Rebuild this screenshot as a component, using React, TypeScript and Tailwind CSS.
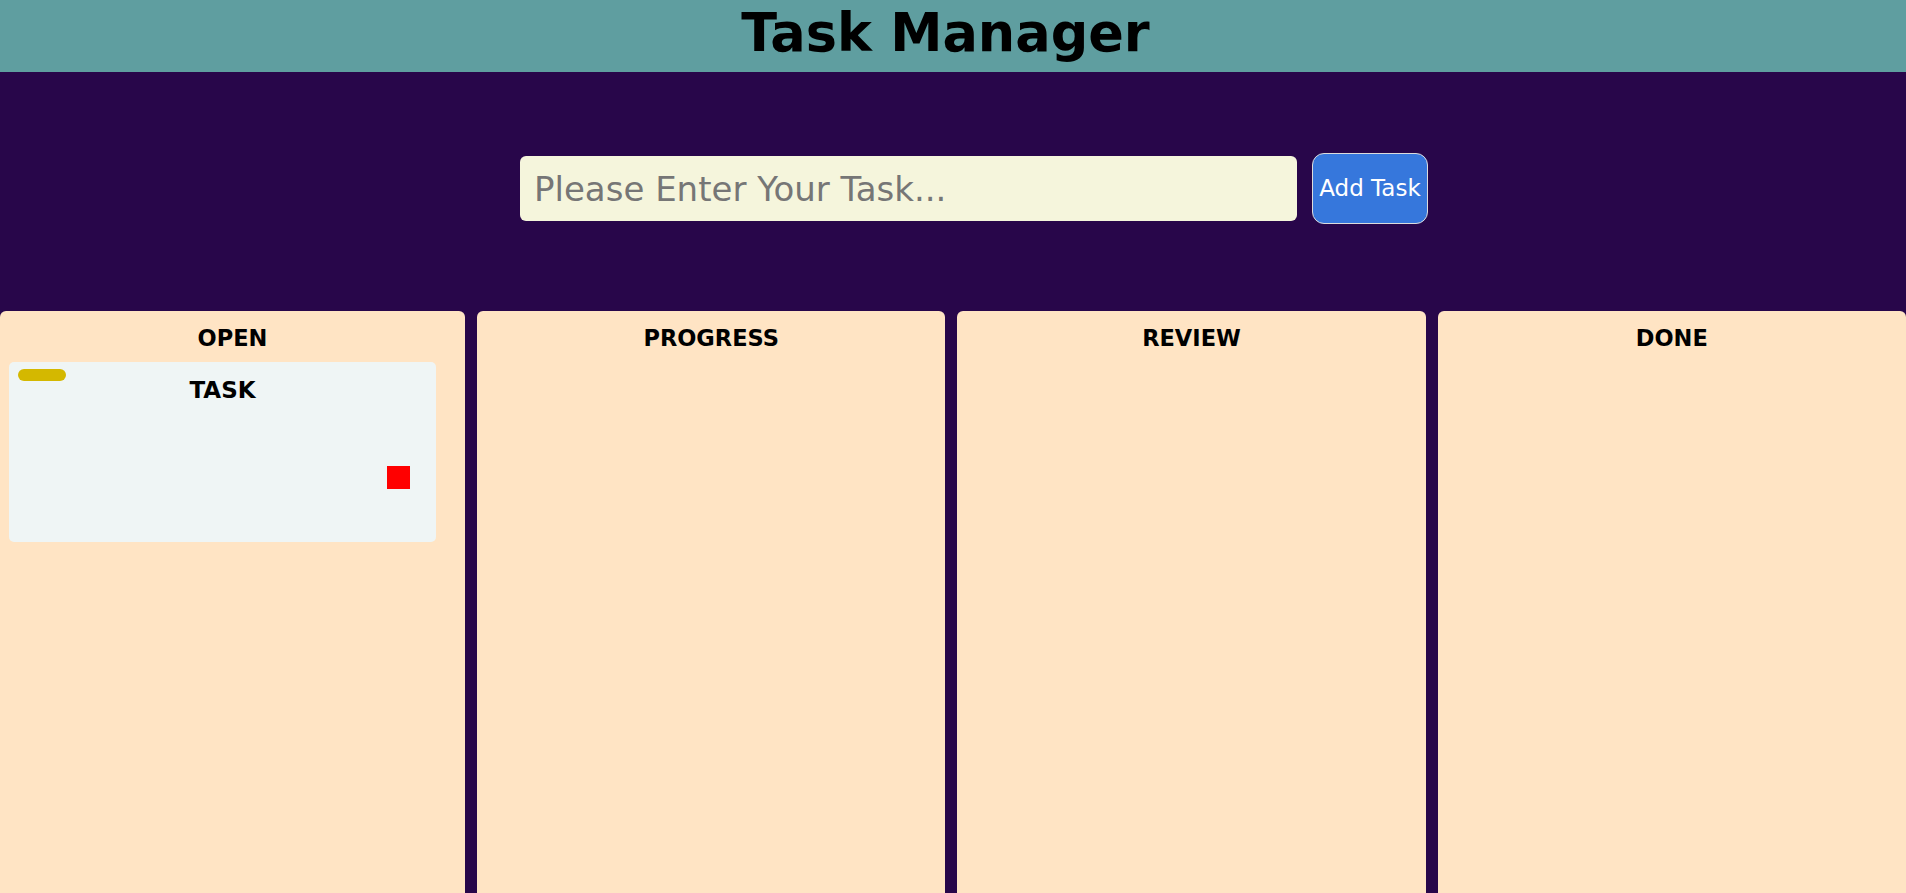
const columns = ['OPEN', 'PROGRESS', 'REVIEW', 'DONE'];

function TaskCard() {
  return (
    <div className="relative ml-[9px] mt-[11px] h-[180px] w-[427px] rounded-[5px] bg-[#eff5f5] pt-[15px]">
      <span className="absolute left-[9px] top-[7px] h-3 w-12 rounded-full bg-[#d4b800]" />
      <p className="text-center text-[23px] leading-[normal] font-bold text-black">TASK</p>
      <div className="mt-[63px] flex justify-end pr-[26px]">
        <button type="button" aria-label="delete" className="h-[23px] w-[23px] bg-[#ff0000]" />
      </div>
    </div>
  );
}

function Column({ title }: { title: string }) {
  return (
    <section className="min-h-[600px] rounded-t-md bg-[#ffe4c4] pt-[14px]">
      <h2 className="text-center text-[22.5px] leading-[normal] font-bold text-black">{title}</h2>
      {title === 'OPEN' && <TaskCard />}
    </section>
  );
}

export default function App() {
  return (
    <div className="min-h-screen bg-[#28064a] font-['DejaVu_Sans',sans-serif]">
      <header className="flex h-[72px] items-start justify-center bg-[#5f9ea0] pr-[15px] pt-[7px]">
        <h1 className="text-[52.5px] leading-none font-bold text-black">Task Manager</h1>
      </header>
      <form
        className="flex items-center justify-center gap-[15px] pb-[87px] pl-[42px] pt-[81px]"
        onSubmit={(e) => e.preventDefault()}
      >
        <input
          type="text"
          placeholder="Please Enter Your Task..."
          className="h-[65px] w-[777px] rounded-md bg-[#f5f5dc] px-[14px] text-[34px] outline-none placeholder:text-[#767676]"
        />
        <button
          type="submit"
          className="h-[71px] w-[116px] rounded-xl border border-[#dcdcdc] bg-[#3677dc] text-[23px] text-white"
        >
          Add Task
        </button>
      </form>
      <div className="grid grid-cols-[465px_1fr_1fr_1fr] gap-3">
        {columns.map((c) => (
          <Column key={c} title={c} />
        ))}
      </div>
    </div>
  );
}
